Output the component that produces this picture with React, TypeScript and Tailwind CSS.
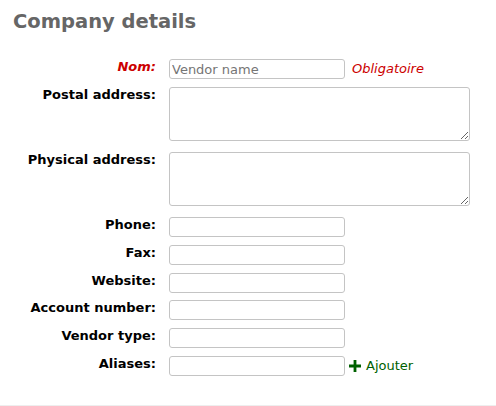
import React from "react";

const font = { fontFamily: '"DejaVu Sans", Verdana, sans-serif' };

const Label: React.FC<{ text: string; required?: boolean }> = ({ text, required }) => (
	<label
		className={`w-[156px] shrink-0 text-right text-[13px] font-bold leading-[16px] ${
			required ? "text-[#cc0000] italic" : "text-black"
		}`}
	>
		{text}
	</label>
);

const inputCls =
	"w-[176px] h-[20px] border border-[#c4c4c4] rounded-[3px] px-[2px] text-[13px] text-black placeholder:text-[#757575] bg-white outline-none";
const areaCls =
	"w-[301px] h-[54px] border border-[#c4c4c4] rounded-[3px] px-[2px] text-[13px] bg-white outline-none";

const InputRow: React.FC<{ label: string; extra?: React.ReactNode }> = ({ label, extra }) => (
	<div className="flex items-start gap-[13px] mb-[7.75px]">
		<Label text={label} />
		<div className="flex items-center">
			<input className={inputCls} />
			{extra}
		</div>
	</div>
);

const AreaRow: React.FC<{ label: string }> = ({ label }) => (
	<div className="flex items-start gap-[13px] mb-[11px]">
		<Label text={label} />
		<textarea className={areaCls} />
	</div>
);

export default function App() {
	return (
		<div className="w-[496px] h-[406px] bg-white border-b border-[#eeeeee]" style={font}>
			<h2 className="pl-[13px] pt-[9px] text-[19.5px] font-bold text-[#666666] leading-[26px]">
				Company details
			</h2>

			<div className="mt-[24px]">
				<div className="flex items-start gap-[13px] mb-[8px]">
					<Label text="Nom:" required />
					<div className="flex items-center">
						<input className={inputCls} placeholder="Vendor name" />
						<span className="ml-[7px] text-[13px] italic text-[#cc0000]">Obligatoire</span>
					</div>
				</div>

				<AreaRow label="Postal address:" />
				<AreaRow label="Physical address:" />
				<InputRow label="Phone:" />
				<InputRow label="Fax:" />
				<InputRow label="Website:" />
				<InputRow label="Account number:" />
				<InputRow label="Vendor type:" />
				<InputRow
					label="Aliases:"
					extra={
						<a className="ml-[4px] flex items-center text-[13px] text-[#006100]">
							<svg width="12" height="12" viewBox="0 0 12 12" className="mr-[5px]">
								<path d="M4.6 0h2.8v4.6H12v2.8H7.4V12H4.6V7.4H0V4.6h4.6z" fill="#006100" />
							</svg>
							Ajouter
						</a>
					}
				/>
			</div>
		</div>
	);
}
